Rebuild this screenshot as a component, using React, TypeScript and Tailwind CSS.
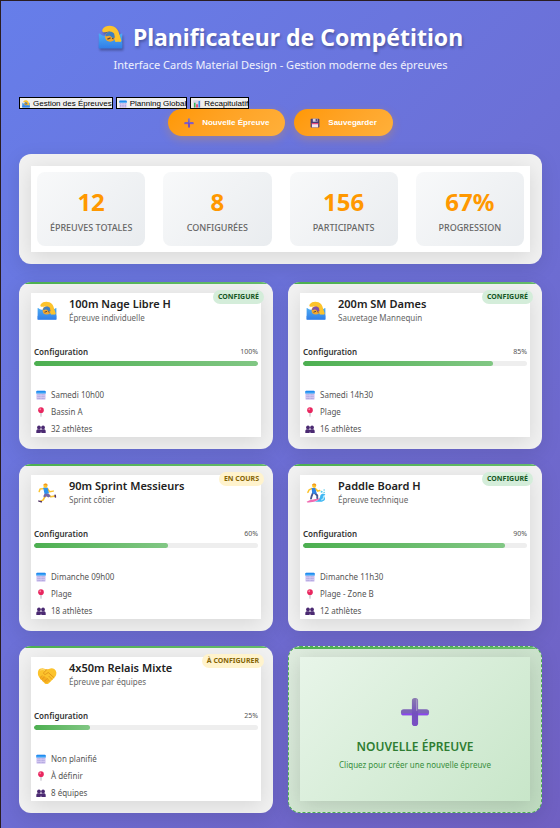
import React from "react";

type IconProps = { className?: string };

function Swimmer({ className, hair = "#3f7fc0" }: IconProps & { hair?: string }) {
  const id = React.useId();
  return (
    <svg viewBox="0 0 32 32" className={className} aria-hidden="true">
      <defs>
        <linearGradient id={id} x1="0" y1="10" x2="0" y2="31" gradientUnits="userSpaceOnUse">
          <stop offset="0" stopColor="#4fb0f5" />
          <stop offset="1" stopColor="#2f7be6" />
        </linearGradient>
      </defs>
      <path d="M1 11c2 0 4 3 7 3s5-2 8-2 5 2 8 2 5-3 7-3v19H1z" fill={`url(#${id})`} />
      <path d="M6 5C9 1 15 0 20 2c4 2 6 5 7 9l3 9c-1 3-6 3-8 1l-4-10c-2-3-4-3-7-2-4 1-7 0-5-4z" fill="#fcc32c" />
      <circle cx="15.500" cy="15" r="6.500" fill="#f2a72e" />
      <path d="M9.500 14c1-6 8-7 11-3l1 5c-3 2-4-1-6-2s-4 1-6 0z" fill={hair} />
      <path d="M12 18l4-1.500M18 17l2 1" stroke="#5a4a42" strokeWidth="1.600" />
      <path d="M1 24c3-3 6-2 9-1s7 2 10 0 8-2 11 0v6H1z" fill={`url(#${id})`} />
    </svg>
  );
}

function Runner({ className }: IconProps) {
  return (
    <svg viewBox="0 0 32 32" className={className} aria-hidden="true" fill="none" strokeLinecap="round" strokeLinejoin="round">
      <path d="M17 18l-5 5-2 4-4 2" stroke="#fcc32c" strokeWidth="2.600" />
      <path d="M18 19l4 3 6-1" stroke="#fcc32c" strokeWidth="2.600" />
      <path d="M11 9l-6 .5-1.500 4" stroke="#fcc32c" strokeWidth="2.400" />
      <path d="M17 9l3 5 6-1" stroke="#fcc32c" strokeWidth="2.400" />
      <path d="M11 8h5l2 8-5 1z" fill="#2f93ee" stroke="#2f93ee" strokeWidth="2" />
      <path d="M12 17h7l3 4-4 2-3-2-3 2-2-2z" fill="#7368a8" />
      <path d="M3 29l4 1M29 19.500l.5 3" stroke="#533566" strokeWidth="2.400" />
      <circle cx="13.500" cy="4.500" r="3.300" fill="#fcc32c" />
      <path d="M10 3.500c1-3.500 7-3.500 7 .5-2 0-4-1-7-.5z" fill="#f19a1c" />
    </svg>
  );
}

function Surfer({ className }: IconProps) {
  return (
    <svg viewBox="0 0 32 32" className={className} aria-hidden="true" fill="none" strokeLinecap="round" strokeLinejoin="round">
      <path d="M12 30c8-1 10-5 11-10 1-3 6-4 8-1-2 0-3 1-1 4 2 5-3 7-9 7z" fill="#3eb6f2" />
      <path d="M25 27c3-1 4-3 3-6" stroke="#a7e5fb" strokeWidth="2" />
      <g fill="#55cbea">
        <circle cx="25" cy="14" r="1.600" />
        <circle cx="29" cy="11" r="1.200" />
        <circle cx="29" cy="15" r="1.200" />
      </g>
      <path d="M1 30c6-4 14-4 22-6-3 4-13 8-21 7z" fill="#f06ab2" />
      <path d="M11 16l-2 5-1 4M14 16l4 4v4" stroke="#4a5590" strokeWidth="3" />
      <path d="M9 9l-4 2-2 4M15 9l4 4 3-1" stroke="#fcc32c" strokeWidth="2.400" />
      <path d="M10 9h4l2 7h-5z" fill="#2f83e6" stroke="#2f83e6" strokeWidth="2" />
      <circle cx="13" cy="4.500" r="3.300" fill="#fcc32c" />
      <path d="M9.500 3.500c1-3.500 7-3.500 7 .5-2 0-4-1-7-.5z" fill="#f19a1c" />
    </svg>
  );
}

function Handshake({ className }: IconProps) {
  return (
    <svg viewBox="0 0 32 32" className={className} aria-hidden="true" fill="none" strokeLinecap="round" strokeLinejoin="round">
      <path d="M2 9c1-3 4-4 7-4l7 2 7-2c4 0 7 2 8 7 0 4-1 6-3 8l-9 9c-2 2-5 2-7 0L4 20C1 17 1 12 2 9z" fill="#fcc32c" />
      <path d="M5 19c-1 3 1 5 3 4 0 3 2 4 4 3 0 3 3 4 5 2l2-2-7-9z" fill="#f6ad1f" />
      <path d="M16 7l-5 5c-1 3 2 4 4 2l3-2 9 8" stroke="#d98a16" strokeWidth="1.200" />
      <path d="M19 18l5 5M16 21l4 5M5 20l3-3M8 23l3-3M12 26l3-3" stroke="#d98a16" strokeWidth="1.100" />
      <path d="M6 8c2-1 4-1 6 0" stroke="#ffe08a" strokeWidth="1.500" />
    </svg>
  );
}

function Calendar({ className }: IconProps) {
  return (
    <svg viewBox="0 0 32 32" className={className} aria-hidden="true">
      <rect x="1" y="2" width="30" height="29" rx="3" fill="#d9cdf3" />
      <path d="M1 5a3 3 0 0 1 3-3h24a3 3 0 0 1 3 3v5H1z" fill="#1f8df0" />
      <path d="M1 8h30v3H1z" fill="#54b4f8" />
      <g fill="#8f86cf">
        {[14, 20, 26].map((y) => (
          <React.Fragment key={y}>
            <rect x="5" y={y} width="3" height="3" />
            <rect x="11" y={y} width="3" height="3" />
            <rect x="18" y={y} width="3" height="3" />
            <rect x="24" y={y} width="3" height="3" />
          </React.Fragment>
        ))}
      </g>
    </svg>
  );
}

function Pin({ className }: IconProps) {
  return (
    <svg viewBox="0 0 32 32" className={className} aria-hidden="true">
      <path d="M14.500 16h3l-.5 14a1 1 0 0 1-2 0z" fill="#9b93a8" />
      <circle cx="16" cy="10" r="9" fill="#e8265f" />
      <circle cx="13.500" cy="7" r="3" fill="#ff7fa0" />
    </svg>
  );
}

function People({ className }: IconProps) {
  return (
    <svg viewBox="0 0 32 32" className={className} aria-hidden="true" fill="#4b2a72">
      <circle cx="9.500" cy="11" r="6" />
      <circle cx="22.500" cy="11" r="6" />
      <path d="M1 29v-6c0-4 3-6 6-6h5c2 0 3 .5 4 2 1-1.500 2-2 4-2h5c3 0 6 2 6 6v6H17v-4h-2v4z" />
    </svg>
  );
}

function Plus({ className }: IconProps) {
  const id = React.useId();
  return (
    <svg viewBox="0 0 32 32" className={className} aria-hidden="true">
      <defs>
        <linearGradient id={id} x1="0" y1="0" x2="0" y2="1">
          <stop offset="0" stopColor="#8a7bb0" />
          <stop offset="0.550" stopColor="#7350bd" />
          <stop offset="1" stopColor="#7a4fc4" />
        </linearGradient>
      </defs>
      <rect x="1" y="13" width="30" height="6.500" rx="3" fill="#7d64b8" />
      <path d="M2.500 18.500h27" stroke="#8b45f0" strokeWidth="1.800" strokeLinecap="round" />
      <rect x="12.700" y="1" width="6.600" height="30" rx="3" fill={`url(#${id})`} />
      <path d="M17.800 3v11" stroke="#a99ac6" strokeWidth="1.200" strokeLinecap="round" />
    </svg>
  );
}

function Floppy({ className }: IconProps) {
  return (
    <svg viewBox="0 0 32 32" className={className} aria-hidden="true">
      <path d="M2 4a2 2 0 0 1 2-2h24l2 2v24a2 2 0 0 1-2 2H4a2 2 0 0 1-2-2z" fill="#4a3b72" />
      <rect x="9" y="2" width="15" height="10" fill="#d5d0e2" />
      <rect x="18" y="3" width="4" height="8" fill="#4a3b72" />
      <rect x="6" y="16" width="20" height="14" fill="#f3e3ee" />
      <rect x="6" y="16" width="20" height="4" fill="#e5487d" />
    </svg>
  );
}

function Chart({ className }: IconProps) {
  return (
    <svg viewBox="0 0 32 32" className={className} aria-hidden="true">
      <rect x="1" y="1" width="30" height="30" rx="2" fill="#d8d3e6" />
      <rect x="4" y="11" width="6" height="19" fill="#2fb457" />
      <rect x="13" y="17" width="6" height="13" fill="#e5305f" />
      <rect x="22" y="4" width="6" height="26" fill="#2c8be8" />
    </svg>
  );
}

const stats = [
  { value: "12", label: "Épreuves totales" },
  { value: "8", label: "Configurées" },
  { value: "156", label: "Participants" },
  { value: "67%", label: "Progression" },
];

type Status = "done" | "pending";

type EventItem = {
  icon: React.ReactNode;
  title: string;
  subtitle: string;
  badge: string;
  status: Status;
  progress: number;
  date: string;
  place: string;
  people: string;
};

const events: EventItem[] = [
  { icon: <Swimmer className="size-5" />, title: "100m Nage Libre H", subtitle: "Épreuve individuelle", badge: "Configuré", status: "done", progress: 100, date: "Samedi 10h00", place: "Bassin A", people: "32 athlètes" },
  { icon: <Swimmer className="size-5" hair="#8052a8" />, title: "200m SM Dames", subtitle: "Sauvetage Mannequin", badge: "Configuré", status: "done", progress: 85, date: "Samedi 14h30", place: "Plage", people: "16 athlètes" },
  { icon: <Runner className="size-5" />, title: "90m Sprint Messieurs", subtitle: "Sprint côtier", badge: "En cours", status: "pending", progress: 60, date: "Dimanche 09h00", place: "Plage", people: "18 athlètes" },
  { icon: <Surfer className="size-5" />, title: "Paddle Board H", subtitle: "Épreuve technique", badge: "Configuré", status: "done", progress: 90, date: "Dimanche 11h30", place: "Plage - Zone B", people: "12 athlètes" },
  { icon: <Handshake className="size-5" />, title: "4x50m Relais Mixte", subtitle: "Épreuve par équipes", badge: "À configurer", status: "pending", progress: 25, date: "Non planifié", place: "À définir", people: "8 équipes" },
];

const badgeStyle: Record<Status, string> = {
  done: "bg-[#d4edda] text-[#155724]",
  pending: "bg-[#fff3cd] text-[#856404]",
};

function EventCard({ event }: { event: EventItem }) {
  return (
    <article className="relative overflow-hidden rounded-xl bg-[#f1f1f1] px-3 pt-[11px] pb-3 shadow-[0_5px_19px_rgba(0,0,0,0.1)]">
      <div className="absolute inset-x-0 top-0 h-0.5 bg-linear-to-r from-[#4caf50] to-[#66bb6a]" />
      <span className={`absolute top-2 right-[9px] rounded-full px-[5px] text-[7px] leading-[14px] font-bold uppercase ${badgeStyle[event.status]}`}>
        {event.badge}
      </span>
      <div className="bg-white px-[3px] pt-1 shadow-[0_4px_19px_rgba(0,0,0,0.11)]">
        <header className="flex gap-3 pl-[3px]">
          <div className="pt-1">{event.icon}</div>
          <div>
            <h2 className="text-[11px] leading-[14px] font-semibold text-[#222]">{event.title}</h2>
            <p className="text-[8px] leading-[13px] text-[#666]">{event.subtitle}</p>
          </div>
        </header>
        <div className="mt-[22px] flex items-center justify-between leading-3">
          <span className="text-[8px] font-semibold text-[#333]">Configuration</span>
          <span className="text-[7px] text-[#555]">{event.progress}%</span>
        </div>
        <div
          role="progressbar"
          aria-label={`Configuration ${event.title}`}
          aria-valuenow={event.progress}
          className="mt-[3px] h-[5px] overflow-hidden rounded-full bg-[#eee]"
        >
          <div className="h-full rounded-full bg-linear-to-r from-[#4caf50] to-[#81c784]" style={{ width: `${event.progress}%` }} />
        </div>
        <ul className="mt-5 pl-0.5 text-[8px] leading-[17px] text-[#555]">
          <li className="flex items-center gap-[5px]"><Calendar className="size-2.5" />{event.date}</li>
          <li className="flex items-center gap-[5px]"><Pin className="size-2.5" />{event.place}</li>
          <li className="flex items-center gap-[5px]"><People className="size-2.5" />{event.people}</li>
        </ul>
      </div>
    </article>
  );
}

const tabStyle = "flex h-3 items-center gap-[3px] overflow-hidden border border-black bg-[#efefef] pt-0.5 pl-0.5 whitespace-nowrap";
const actionStyle =
  "flex h-[27px] items-center gap-2 rounded-full bg-linear-135 from-[#ff9800] to-[#ffb03a] px-4 font-['Liberation_Sans',Arial,sans-serif] text-[8px] font-bold text-white shadow-[0_3px_10px_rgba(255,152,0,0.3)]";

export default function App() {
  return (
    <div className="min-h-screen border-t border-l border-[#2a1d22] bg-linear-135 from-[#667eea] to-[#7060c2] px-[18px] pb-[15px] font-['Noto_Sans','Open_Sans',sans-serif]">
      <header className="pt-5 text-center">
        <h1 className="flex items-center justify-center gap-2.5 text-[23px] leading-8 font-bold text-white [text-shadow:1px_2px_3px_rgba(0,0,0,0.3)]">
          <Swimmer className="size-[25px] drop-shadow-[1px_2px_1px_rgba(0,0,0,0.3)]" />
          Planificateur de Compétition
        </h1>
        <p className="mt-1 text-[11px] leading-4 text-white/90">Interface Cards Material Design - Gestion moderne des épreuves</p>
      </header>

      <nav className="mt-6 flex gap-[3px] font-['Liberation_Sans',Arial,sans-serif] text-[8px] leading-[10px] text-black">
        <button className={tabStyle}><Swimmer className="size-2" />Gestion des Épreuves</button>
        <button className={tabStyle}><Calendar className="size-2" />Planning Global</button>
        <button className={tabStyle}><Chart className="size-2" />Récapitulatif</button>
      </nav>

      <div className="flex justify-center gap-[9px]">
        <button className={actionStyle}><Plus className="size-2.5" />Nouvelle Épreuve</button>
        <button className={actionStyle}><Floppy className="size-2.5" />Sauvegarder</button>
      </div>

      <main>
        <section className="mt-[18px] overflow-hidden rounded-xl bg-[#f1f1f1] p-3 shadow-[0_5px_19px_rgba(0,0,0,0.1)]">
          <div className="grid grid-cols-4 gap-[18px] bg-white p-1.5 shadow-[0_4px_19px_rgba(0,0,0,0.11)]">
            {stats.map((s) => (
              <div key={s.label} className="rounded-lg bg-linear-135 from-[#f8f9fa] to-[#e9ecef] pt-[14px] pb-3 text-center">
                <div className="text-[24px] leading-8 font-bold text-[#ff9800]">{s.value}</div>
                <div className="mt-1 text-[9px] leading-3 font-medium whitespace-nowrap text-[#666] uppercase">{s.label}</div>
              </div>
            ))}
          </div>
        </section>

        <section className="mt-[18px] grid grid-cols-2 gap-[15px]">
          {events.map((e) => (
            <EventCard key={e.title} event={e} />
          ))}
          <button className="relative flex overflow-hidden rounded-xl border border-dashed border-[#4caf50] bg-linear-135 from-[#dfecdf] to-[#bfdcc0] px-[11px] pt-2.5 pb-[11px] shadow-[0_5px_19px_rgba(0,0,0,0.1)]">
            <span className="absolute inset-x-0 top-0 h-0.5 bg-linear-to-r from-[#4caf50] to-[#66bb6a]" />
            <span className="flex flex-1 flex-col items-center justify-center self-stretch bg-linear-135 from-[#e8f5e9] to-[#c8e6c9] pt-2.5 shadow-[0_4px_19px_rgba(0,0,0,0.13)]">
              <Plus className="size-[30px]" />
              <span className="mt-3 text-[12px] leading-4 font-semibold text-[#2e7d32] uppercase">Nouvelle épreuve</span>
              <span className="mt-1 text-[8px] leading-3 text-[#388e3c]">Cliquez pour créer une nouvelle épreuve</span>
            </span>
          </button>
        </section>
      </main>
    </div>
  );
}
